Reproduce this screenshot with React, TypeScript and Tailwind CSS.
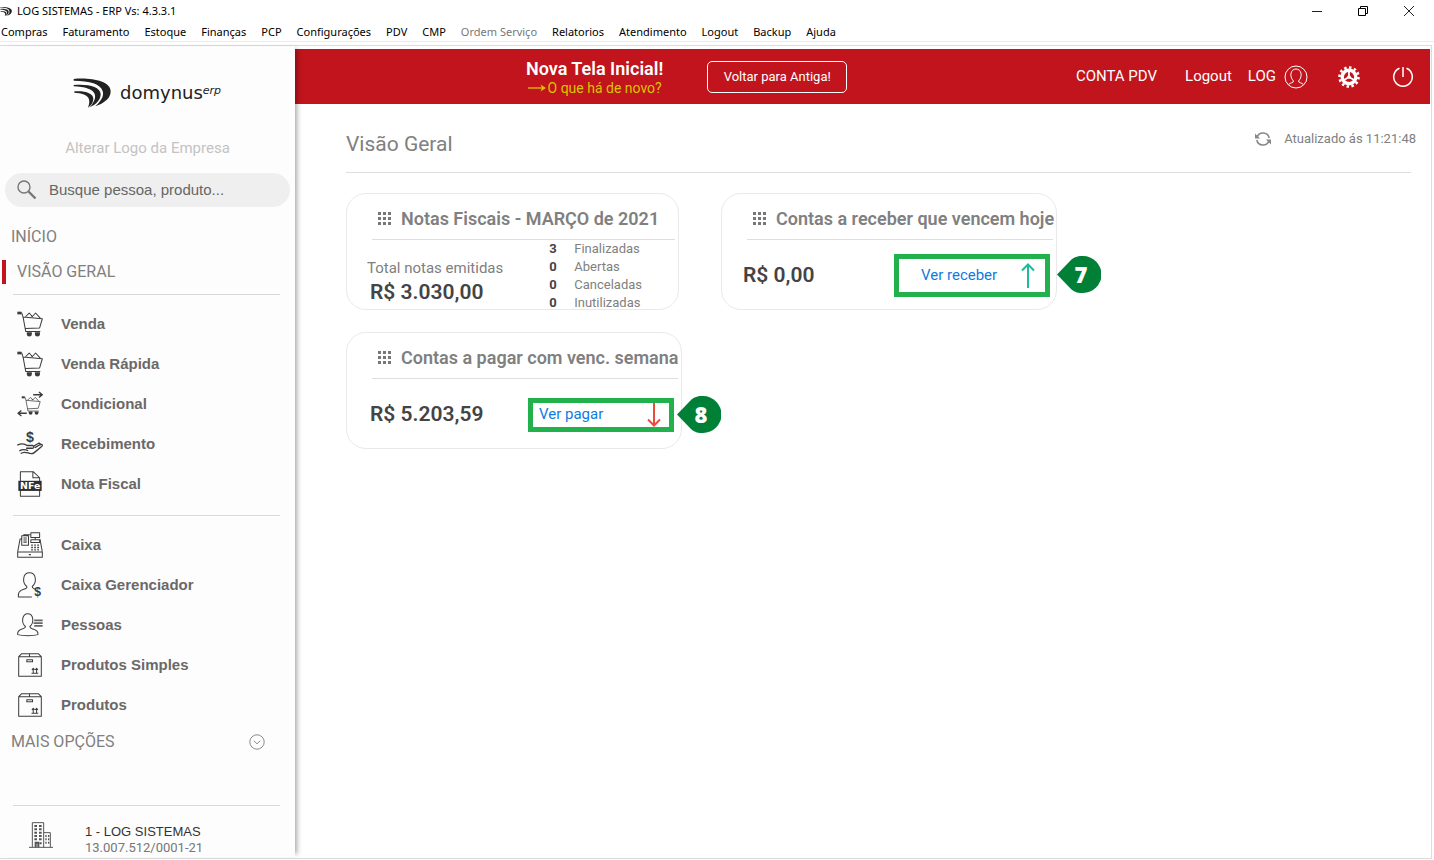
import type { ReactNode } from 'react';

const menus = [
  'Compras',
  'Faturamento',
  'Estoque',
  'Finanças',
  'PCP',
  'Configurações',
  'PDV',
  'CMP',
  'Ordem Serviço',
  'Relatorios',
  'Atendimento',
  'Logout',
  'Backup',
  'Ajuda',
];

const notas = [
  { label: 'Finalizadas', total: 3 },
  { label: 'Abertas', total: 0 },
  { label: 'Canceladas', total: 0 },
  { label: 'Inutilizadas', total: 0 },
];

function Swoosh({ className }: { className: string }) {
  return (
    <svg viewBox="0 0 114 90" className={className} aria-hidden="true" fill="#222">
      <path d="M2 3C50-2 113 8 113 40c0 22-20 36-46 45 16-15 27-30 22-45C84 18 50 8 2 8z" />
      <path d="M2 21c40-4 80 4 81 27 0 16-12 31-33 40 14-16 19-29 15-40C60 34 35 26 2 25z" />
      <path d="M4 40c30-3 57 5 57 22 0 11-6 19-16 27 4-11 6-22 1-30-6-9-20-14-42-15z" />
    </svg>
  );
}

function Icon({ children }: { children: ReactNode }) {
  return (
    <svg
      viewBox="-1 -1 77 77"
      className="size-[26px] shrink-0 overflow-visible"
      fill="none"
      stroke="#3c3c3c"
      strokeWidth="3"
      strokeLinejoin="round"
      aria-hidden="true"
    >
      {children}
    </svg>
  );
}

function Cart() {
  return (
    <>
      <path d="M2 5h11l4 12 8 43h43M17 17l57 5-8 27-43 2" />
      <path d="M24 16l11-11 10 11M41 12l3 4 10-11 14 15" />
      <path d="M0 1h12v8H0z" fill="#3c3c3c" stroke="none" />
      <path d="M28 62h15v6a7 6 0 0 1-15 0zM52 62h15v6a7 6 0 0 1-15 0z" fill="#3c3c3c" stroke="none" />
    </>
  );
}

function CartIcon() {
  return (
    <Icon>
      <Cart />
    </Icon>
  );
}

function CartArrowsIcon() {
  return (
    <Icon>
      <g transform="translate(13 14) scale(.74)">
        <Cart />
      </g>
      <path d="M47 10h26M64 2l10 8-10 8M28 65H3M12 57L2 65l10 8" strokeWidth="4" />
    </Icon>
  );
}

function HandIcon() {
  return (
    <Icon>
      <text
        x="37"
        y="33"
        textAnchor="middle"
        fontSize="42"
        fontWeight="700"
        fill="#3c3c3c"
        stroke="none"
        fontFamily="Liberation Sans, sans-serif"
      >
        $
      </text>
      <path
        d="M0 41c12-6 20-6 29 1h17c5 2 4 8-2 8H26M46 45l16-9c5-2 8 1 4 5M52 48l16-9c6-2 8 2 4 6L50 63c-5 4-11 4-18 1-10-3-16-4-22 2M6 58c10-6 17-5 26-1"
        strokeWidth="4"
      />
    </Icon>
  );
}

function NfeIcon() {
  return (
    <Icon>
      <path d="M9 1h38l19 18v55H9zM46 1v18h20" />
      <path d="M3 28h69v30H3z" fill="#2e2e2e" stroke="none" />
      <text
        x="38"
        y="53"
        textAnchor="middle"
        fontSize="28"
        fontWeight="700"
        fill="#fff"
        stroke="none"
        fontFamily="DejaVu Sans, sans-serif"
      >
        NFe
      </text>
    </Icon>
  );
}

function RegisterIcon() {
  return (
    <Icon>
      <path d="M1 58h73v16H1zM1 58l7-38h5M74 58l-7-38M13 10h20v28H13zM19 10V7h20M18 17h10M18 23h10M18 29h10" />
      <path d="M40 1h26v14H40zM53 15v6M40 22h26v8H40z" />
      <path d="M41 38h5M50 38h5M59 38h5M41 45h5M50 45h5M59 45h5M41 52h5M50 52h5M59 52h5M34 66h6" strokeWidth="4" />
    </Icon>
  );
}

function ManagerIcon() {
  return (
    <Icon>
      <path d="M43 73H3c-2-14 5-20 16-23 8-2 10-4 9-8C14 31 15 1 36 1s22 30 8 41c-1 5 5 6 11 9" />
      <text
        x="60"
        y="71"
        textAnchor="middle"
        fontSize="36"
        fontWeight="700"
        fill="#3c3c3c"
        stroke="none"
        fontFamily="Liberation Sans, sans-serif"
      >
        $
      </text>
    </Icon>
  );
}

function PeopleIcon() {
  return (
    <Icon>
      <path d="M24 42C11 32 13 4 31 4s19 28 6 38c0 6 5 6 13 9 9 3 12 8 11 15-14 4-46 4-60 0-1-8 3-13 11-16 8-2 12-3 12-8z" />
      <path d="M50 24h25M48 32h27M50 40h25" strokeWidth="5" stroke="#666" />
    </Icon>
  );
}

function BoxIcon() {
  return (
    <Icon>
      <path d="M4 13h67v58H4zM4 13l9-9h49l9 9M36 4v9M28 22h17v6H28z" />
      <path d="M42 62h20M47 61V48M57 61V48M43 52l4-5 4 5M53 52l4-5 4 5" />
    </Icon>
  );
}

const vendas = [
  { label: 'Venda', icon: <CartIcon /> },
  { label: 'Venda Rápida', icon: <CartIcon /> },
  { label: 'Condicional', icon: <CartArrowsIcon /> },
  { label: 'Recebimento', icon: <HandIcon /> },
  { label: 'Nota Fiscal', icon: <NfeIcon /> },
];

const cadastros = [
  { label: 'Caixa', icon: <RegisterIcon /> },
  { label: 'Caixa Gerenciador', icon: <ManagerIcon /> },
  { label: 'Pessoas', icon: <PeopleIcon /> },
  { label: 'Produtos Simples', icon: <BoxIcon /> },
  { label: 'Produtos', icon: <BoxIcon /> },
];

function SideList({ items }: { items: { label: string; icon: ReactNode }[] }) {
  return (
    <ul className="mt-[9px]">
      {items.map((item) => (
        <li key={item.label}>
          <a
            href="#"
            className="flex h-10 items-center gap-[18px] pl-[17px] font-['Liberation_Sans',sans-serif] text-[15px] font-bold text-[#6b6868]"
          >
            {item.icon}
            {item.label}
          </a>
        </li>
      ))}
    </ul>
  );
}

function Sidebar() {
  return (
    <aside className="relative z-10 w-[295px] shrink-0 bg-[#fdfdfd] pt-8 shadow-[5px_0_5px_-3px_rgba(0,0,0,0.35)]">
      <div className="flex h-[30px] items-center gap-[9px] pl-[73px]">
        <Swoosh className="h-[30px] w-[38px]" />
        <span className="flex items-start font-['DejaVu_Sans',sans-serif] text-[18px] leading-6 text-[#222]">
          domynus
          <em className="text-[11px] leading-5">erp</em>
        </span>
      </div>
      <button className="mx-auto mt-7 block text-[15px] leading-6 text-[#c3c3c3]">
        Alterar Logo da Empresa
      </button>

      <label className="mt-[13px] mr-[5px] ml-[5px] flex h-[34px] items-center gap-3 rounded-full bg-[#efefef] pl-3">
        <svg viewBox="0 0 20 20" className="size-5" fill="none" stroke="#777" aria-hidden="true">
          <circle cx="7" cy="7" r="6" strokeWidth="1.4" />
          <path d="M11.5 11.5l7 7" strokeWidth="2.4" />
        </svg>
        <input
          type="text"
          aria-label="Busque pessoa, produto"
          placeholder="Busque pessoa, produto..."
          className="min-w-0 flex-1 bg-transparent font-['Liberation_Sans',sans-serif] text-[15px] outline-none placeholder:text-[#666]"
        />
      </label>

      <a href="#" className="mt-[18px] block pl-[11px] text-[16px] leading-6 text-[#808080]">
        INÍCIO
      </a>
      <a
        href="#"
        className="mt-[11px] ml-[2px] block border-l-4 border-[#c1141c] pl-[11px] text-[16px] leading-6 text-[#808080]"
      >
        VISÃO GERAL
      </a>
      <hr className="mt-[10px] mr-[15px] ml-[13px] border-[#d9d9d9]" />
      <SideList items={vendas} />
      <hr className="mt-[11px] mr-[15px] ml-[13px] border-[#d9d9d9]" />
      <SideList items={cadastros} />

      <button className="mt-[5px] flex w-full items-center justify-between pr-[30px] pl-[11px] text-[16px] leading-6 text-[#808080]">
        MAIS OPÇÕES
        <svg viewBox="0 0 16 16" className="size-4" fill="none" stroke="#8a8a8a" aria-hidden="true">
          <circle cx="8" cy="8" r="7.2" />
          <path d="M4.8 6.8L8 9.8l3.2-3" />
        </svg>
      </button>
      <hr className="mt-[51px] mr-[15px] ml-[13px] border-[#d9d9d9]" />
      <div className="mt-4 flex items-start gap-8 pl-[29px] font-['Liberation_Sans',sans-serif] text-[13px] leading-4">
        <svg viewBox="0 0 72 78" className="h-[26px] w-6" fill="none" stroke="#555" strokeWidth="3" aria-hidden="true">
          <path d="M0 76h72M10 76V2h34v74M44 32h20v44" />
          <path
            d="M16 12h8M30 12h8M16 22h8M30 22h8M16 32h8M30 32h8M16 42h8M30 42h8M16 52h8M30 52h8M32 64h6M20 76V62h8v14M49 42h4M57 42h4M49 52h4M57 52h4M49 62h4M57 62h4"
            strokeWidth="6"
          />
        </svg>
        <div className="pt-[2px]">
          <p className="text-[#333]">1 - LOG SISTEMAS</p>
          <p className="font-[Roboto,sans-serif] text-[#777]">13.007.512/0001-21</p>
        </div>
      </div>
    </aside>
  );
}

function TopBar() {
  return (
    <header className="flex h-[55px] items-center justify-between bg-[#c1141c] pr-4 pl-[231px] whitespace-nowrap text-white">
      <div className="flex items-center gap-11">
        <div className="flex flex-col items-center pt-[2px]">
          <strong className="text-[18px] leading-5 font-semibold">Nova Tela Inicial!</strong>
          <a href="#" className="flex items-center gap-[2px] text-[14px] leading-[18px] text-[#d9c400]">
            <svg viewBox="0 0 18 8" className="h-2 w-[18px]" aria-hidden="true">
              <path d="M0 4h14" stroke="#d9c400" strokeWidth="1.3" />
              <path d="M12.5 0.5L18 4l-5.5 3.5L14 4z" fill="#d9c400" />
            </svg>
            O que há de novo?
          </a>
        </div>
        <button className="h-8 w-[140px] rounded-[5px] border border-white text-[13px]">
          Voltar para Antiga!
        </button>
      </div>

      <div className="flex items-center text-[15px]">
        <a href="#">CONTA PDV</a>
        <a href="#" className="ml-7">
          Logout
        </a>
        <button className="ml-4 flex items-center gap-2">
          LOG
          <svg viewBox="0 0 24 24" className="size-6" fill="none" stroke="#fff" aria-hidden="true">
            <circle cx="12" cy="12" r="11" />
            <path d="M9.5 16C5 11.5 6.500 4 12 4s7 7.500 2.500 12c0 2 3 1.500 5 3.500M9.500 16c0 2-3 1.500-5 3.500" />
          </svg>
        </button>
        <button aria-label="Configurações" className="ml-[30px]">
          <svg viewBox="0 0 22 22" className="size-[22px]" fill="none" stroke="#fff" aria-hidden="true">
            <circle cx="11" cy="11" r="9.5" strokeWidth="2.6" pathLength="24" strokeDasharray="1 1" />
            <circle cx="11" cy="11" r="6.8" strokeWidth="3.4" />
            <path d="M11 5v6l-5 3M11 11l5 3" strokeWidth="1.8" />
            <circle cx="11" cy="11" r="1.8" fill="#fff" stroke="none" />
          </svg>
        </button>
        <button aria-label="Sair" className="ml-8">
          <svg viewBox="0 0 22 22" className="size-[22px]" fill="none" stroke="#fff" strokeWidth="1.5" aria-hidden="true">
            <path d="M7.5 2.3a9.3 9.3 0 1 0 7 0M11 1v10" />
          </svg>
        </button>
      </div>
    </header>
  );
}

function Card({ title, className, children }: { title: string; className: string; children: ReactNode }) {
  return (
    <section className={`relative h-[117px] rounded-[20px] border border-[#e9e9e9] ${className}`}>
      <div className="mr-[3px] ml-[25px] flex h-[46px] items-center gap-[10px] border-b border-[#dedede] pt-1 pl-[6px] whitespace-nowrap">
        <svg viewBox="0 0 13 13" className="size-[13px] shrink-0" fill="#777" aria-hidden="true">
          <path d="M0 0h3v3H0zM5 0h3v3H5zM10 0h3v3h-3zM0 5h3v3H0zM5 5h3v3H5zM10 5h3v3h-3zM0 10h3v3H0zM5 10h3v3H5zM10 10h3v3h-3z" />
        </svg>
        <h2 className="text-[18px] leading-6 font-semibold text-[#808080]">{title}</h2>
      </div>
      {children}
    </section>
  );
}

function Callout({ step, className }: { step: number; className: string }) {
  return (
    <span
      className={`absolute flex h-[37px] w-11 items-center justify-center pl-1 font-['Open_Sans',sans-serif] text-[22px] font-extrabold text-white ${className}`}
    >
      <svg viewBox="0 0 44 37" className="absolute inset-0" fill="#008037" aria-hidden="true">
        <path d="M0 18.5L13 5C18 0 22 0 26 0a18.500 18.500 0 0 1 0 37c-4 0-8 0-13-5z" />
      </svg>
      <span className="relative">{step}</span>
    </span>
  );
}

function Overview() {
  return (
    <main className="flex-1 pr-[14px] pl-[51px]">
      <div className="mr-[5px] border-b border-[#dedede]">
        <div className="-mr-[5px] flex h-[68px] items-center justify-between pt-[14px] text-[#808080]">
          <h1 className="text-[21px]">Visão Geral</h1>
          <button className="mb-3 flex items-center gap-[13px] text-[13px]">
            <svg viewBox="0 0 16 16" className="size-4" fill="none" stroke="#888" strokeWidth="1.6" aria-hidden="true">
              <path d="M2 6.5A6.3 6.3 0 0 1 14.2 7M14 9.5A6.3 6.3 0 0 1 1.8 9" />
              <path d="M0 2.5v5h5zM16 13.5v-5h-5z" fill="#888" stroke="none" />
            </svg>
            Atualizado ás 11:21:48
          </button>
        </div>
      </div>

      <div className="mt-5 grid grid-cols-[336px_336px] gap-x-[39px] gap-y-[22px]">
        <Card title="Notas Fiscais - MARÇO de 2021" className="w-[333px]">
          <div className="flex h-[69px] justify-between pr-9 pl-5">
            <div className="pt-4">
              <p className="text-[15px] leading-6 text-[#808080]">Total notas emitidas</p>
              <p className="pl-[3px] text-[21px] leading-6 font-semibold text-[#444]">R$ 3.030,00</p>
            </div>
            <table className="self-start text-left text-[13px] leading-[18px] text-[#808080]">
              <tbody>
                {notas.map((nota) => (
                  <tr key={nota.label}>
                    <td className="w-[25px] font-bold text-[#444]">{nota.total}</td>
                    <th className="font-normal">{nota.label}</th>
                  </tr>
                ))}
              </tbody>
            </table>
          </div>
        </Card>

        <Card title="Contas a receber que vencem hoje" className="w-[336px]">
          <div className="flex h-[69px] items-center justify-between pt-[2px] pr-[6px] pl-[21px]">
            <p className="text-[21px] font-semibold text-[#444]">R$ 0,00</p>
            <a
              href="#"
              className="flex h-[43px] w-[156px] items-center justify-between border-[5px] border-[#22b14c] pr-[10px] pl-[22px] text-[15px] text-[#0f7be0]"
            >
              Ver receber
              <svg viewBox="0 0 14 26" className="h-[26px] w-[14px]" fill="none" stroke="#1abc9c" strokeWidth="2" aria-hidden="true">
                <path d="M7 25V2M1 7.5L7 1.5l6 6" />
              </svg>
            </a>
          </div>
          <Callout step={7} className="top-[62px] left-[335px]" />
        </Card>

        <Card title="Contas a pagar com venc. semana" className="w-[336px]">
          <div className="flex h-[69px] items-center justify-between pt-[2px] pr-[7px] pl-[23px]">
            <p className="text-[21px] font-semibold text-[#444]">R$ 5.203,59</p>
            <a
              href="#"
              className="flex h-[34px] w-[146px] items-center justify-between border-[5px] border-[#22b14c] pr-2 pl-[6px] text-[15px] text-[#0f7be0]"
            >
              Ver pagar
              <svg viewBox="0 0 14 24" className="h-6 w-[14px]" fill="none" stroke="#e74c3c" strokeWidth="2" aria-hidden="true">
                <path d="M7 0v22M1 16.5l6 6 6-6" />
              </svg>
            </a>
          </div>
          <Callout step={8} className="top-[63px] left-[330px]" />
        </Card>
      </div>
    </main>
  );
}

export default function App() {
  return (
    <div className="flex min-h-screen flex-col bg-white font-[Roboto,sans-serif]">
      <div className="font-['Noto_Sans',sans-serif] text-[11px] text-black">
        <div className="flex h-[22px] items-center justify-between pr-5">
          <div className="flex items-center gap-[5px]">
            <Swoosh className="h-[11px] w-3" />
            LOG SISTEMAS - ERP Vs: 4.3.3.1
          </div>
          <div className="flex items-center gap-9">
            <button aria-label="Minimizar">
              <svg viewBox="0 0 10 10" className="size-[10px]" stroke="#222">
                <path d="M0 5.5h10" />
              </svg>
            </button>
            <button aria-label="Restaurar">
              <svg viewBox="0 0 10 10" className="size-[10px]" fill="none" stroke="#000">
                <path d="M.5 2.5h7v7h-7zM2.5 2.5v-2h7v7h-2" />
              </svg>
            </button>
            <button aria-label="Fechar">
              <svg viewBox="0 0 10 10" className="size-[10px]" stroke="#222">
                <path d="M0 0l10 10M10 0L0 10" />
              </svg>
            </button>
          </div>
        </div>
        <nav className="flex h-5 items-center gap-[15px] border-b border-[#ececec] pt-[2px] pl-px whitespace-nowrap">
          {menus.map((menu) => (
            <button key={menu} disabled={menu === 'Ordem Serviço'} className="disabled:text-[#777]">
              {menu}
            </button>
          ))}
        </nav>
      </div>

      <div className="mt-[3px] mr-[2px] mb-px flex flex-1 border-t border-r border-b border-[#dcdcdc] pb-px">
        <Sidebar />
        <div className="flex min-w-0 flex-1 flex-col pt-[3px] pr-px">
          <TopBar />
          <Overview />
        </div>
      </div>
    </div>
  );
}
